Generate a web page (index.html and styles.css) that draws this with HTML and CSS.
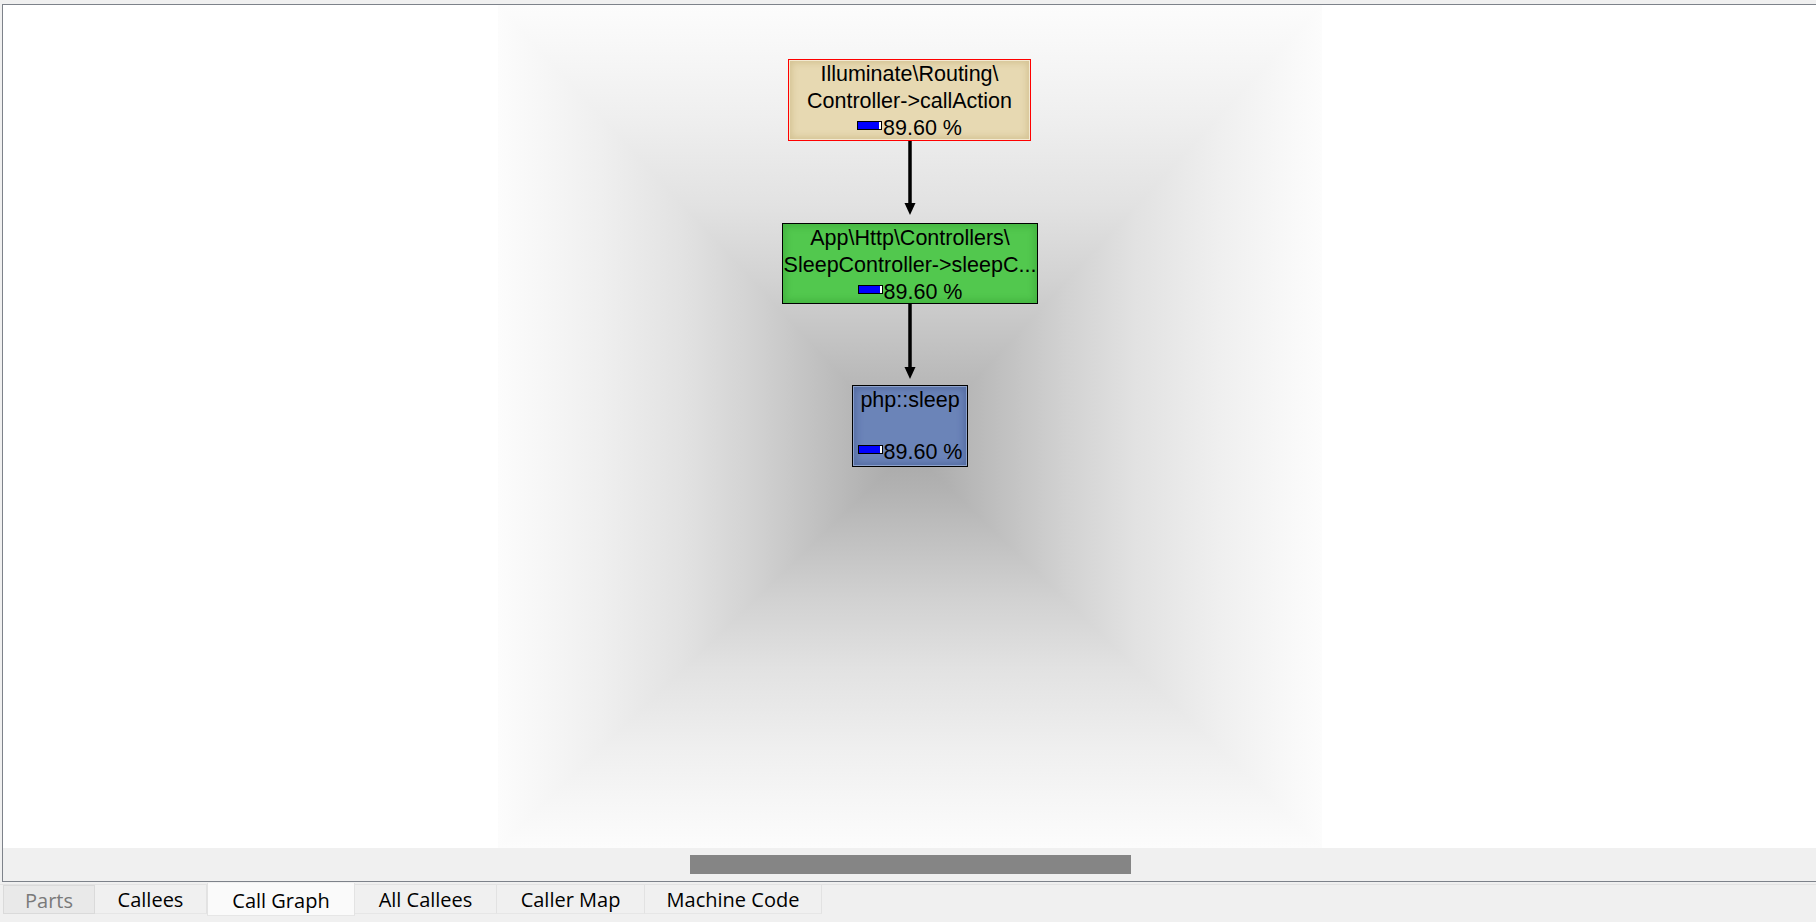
FILE: index.html
```html
<!DOCTYPE html>
<html>
<head>
<meta charset="utf-8">
<title>Call Graph</title>
<link rel="stylesheet" href="styles.css">
</head>
<body>
<div class="app">
  <div class="topgap"></div>
  <div class="panel">
    <div class="canvas">
      <svg class="scene" width="1813" height="843" viewBox="0 0 1813 843" xmlns="http://www.w3.org/2000/svg">
        <defs>
          <linearGradient id="gT" gradientUnits="userSpaceOnUse" x1="0" y1="0" x2="0" y2="445">
            <stop offset="0" stop-color="#fcfcfc"/><stop offset="0.1" stop-color="#f7f7f7"/><stop offset="0.25" stop-color="#efefef"/><stop offset="0.45" stop-color="#e2e2e2"/><stop offset="0.62" stop-color="#d2d2d2"/><stop offset="0.78" stop-color="#c0c0c0"/><stop offset="0.9" stop-color="#b2b2b2"/><stop offset="1" stop-color="#a8a8a8"/>
          </linearGradient>
          <linearGradient id="gB" gradientUnits="userSpaceOnUse" x1="0" y1="843" x2="0" y2="445">
            <stop offset="0" stop-color="#fcfcfc"/><stop offset="0.1" stop-color="#f7f7f7"/><stop offset="0.25" stop-color="#efefef"/><stop offset="0.45" stop-color="#e2e2e2"/><stop offset="0.62" stop-color="#d2d2d2"/><stop offset="0.78" stop-color="#c0c0c0"/><stop offset="0.9" stop-color="#b2b2b2"/><stop offset="1" stop-color="#a8a8a8"/>
          </linearGradient>
          <linearGradient id="gL" gradientUnits="userSpaceOnUse" x1="495" y1="0" x2="907" y2="0">
            <stop offset="0" stop-color="#fcfcfc"/><stop offset="0.1" stop-color="#f7f7f7"/><stop offset="0.25" stop-color="#efefef"/><stop offset="0.45" stop-color="#e2e2e2"/><stop offset="0.62" stop-color="#d2d2d2"/><stop offset="0.78" stop-color="#c0c0c0"/><stop offset="0.9" stop-color="#b2b2b2"/><stop offset="1" stop-color="#a8a8a8"/>
          </linearGradient>
          <linearGradient id="gR" gradientUnits="userSpaceOnUse" x1="1319" y1="0" x2="907" y2="0">
            <stop offset="0" stop-color="#fcfcfc"/><stop offset="0.1" stop-color="#f7f7f7"/><stop offset="0.25" stop-color="#efefef"/><stop offset="0.45" stop-color="#e2e2e2"/><stop offset="0.62" stop-color="#d2d2d2"/><stop offset="0.78" stop-color="#c0c0c0"/><stop offset="0.9" stop-color="#b2b2b2"/><stop offset="1" stop-color="#a8a8a8"/>
          </linearGradient>
        </defs>
        <g shape-rendering="crispEdges">
          <polygon points="495,0 1319,0 907,445" fill="url(#gT)"/>
          <polygon points="495,843 1319,843 907,445" fill="url(#gB)"/>
          <polygon points="495,0 907,445 495,843" fill="url(#gL)"/>
          <polygon points="1319,0 907,445 1319,843" fill="url(#gR)"/>
        </g>
        <line x1="907" y1="136" x2="907" y2="200" stroke="#000" stroke-width="3.5"/>
        <polygon points="901.5,198 912.5,198 907,210" fill="#000"/>
        <line x1="907" y1="299" x2="907" y2="364" stroke="#000" stroke-width="3.5"/>
        <polygon points="901.5,362 912.5,362 907,374" fill="#000"/>
      </svg>

      <div class="node node-caller n1">
        <div class="line">Illuminate\Routing\</div>
        <div class="line">Controller-&gt;callAction</div>
        <div class="line"><span class="bar"></span>89.60 %</div>
      </div>
      <div class="node node-active n2">
        <div class="line">App\Http\Controllers\</div>
        <div class="line">SleepController-&gt;sleepC...</div>
        <div class="line"><span class="bar"></span>89.60 %</div>
      </div>
      <div class="node node-callee n3">
        <div class="line">php::sleep</div>
        <div class="line"></div>
        <div class="line"><span class="bar"></span>89.60 %</div>
      </div>
    </div>
    <div class="hscroll"><div class="thumb"></div></div>
  </div>
  <div class="tabbar">
    <div class="tab disabled t-parts">Parts</div>
    <div class="tab t-callees">Callees</div>
    <div class="tab selected t-graph">Call Graph</div>
    <div class="tab t-all">All Callees</div>
    <div class="tab t-map">Caller Map</div>
    <div class="tab t-code">Machine Code</div>
  </div>
</div>
</body>
</html>
```

FILE: styles.css
```css
html, body {
  margin: 0;
  padding: 0;
}
body {
  width: 1816px;
  height: 922px;
  overflow: hidden;
  background: #f0f0f0;
  font-family: "Open Sans", "Noto Sans", sans-serif;
}
.app {
  display: flex;
  flex-direction: column;
  height: 922px;
}
.topgap {
  height: 4px;
  flex: none;
}
.panel {
  flex: none;
  margin-left: 2px;
  border-top: 1px solid #7d828a;
  border-left: 1px solid #7d828a;
  border-bottom: 1px solid #7d828a;
  display: flex;
  flex-direction: column;
}
.canvas {
  position: relative;
  height: 843px;
  background: #ffffff;
  overflow: hidden;
}
.scene {
  position: absolute;
  left: 0;
  top: 0;
  display: block;
}
.node {
  position: absolute;
  box-sizing: border-box;
  display: flex;
  flex-direction: column;
  align-items: center;
  padding-top: 1px;
  font-family: "Liberation Sans", Arial, sans-serif;
  font-size: 21.5px;
  color: #000;
  white-space: nowrap;
  overflow: hidden;
}
.node .line {
  height: 27px;
  line-height: 27px;
}
.node-caller {
  background: #e7d9b2;
  border: 1px solid #ff0000;
  box-shadow: inset 0 0 0 1px #f3ead2, inset 0 0 6px 3px rgba(160, 130, 60, 0.25);
}
.node-active {
  background: #52c84e;
  border: 1px solid #000;
  box-shadow: inset 0 0 6px 3px rgba(20, 110, 20, 0.22);
}
.node-callee {
  background: #6b84b8;
  border: 1px solid #000;
  box-shadow: inset 0 0 0 1px #8da2cc, inset 0 0 7px 3px rgba(30, 50, 110, 0.3);
}
.n1 { left: 785px; top: 54px; width: 243px; height: 82px; }
.n2 { left: 779px; top: 218px; width: 256px; height: 81px; }
.n3 { left: 849px; top: 380px; width: 116px; height: 82px; }
.bar {
  display: inline-block;
  box-sizing: border-box;
  width: 25px;
  height: 9px;
  border: 1px solid #000;
  background: linear-gradient(to right, #0000ff 90%, #ffffff 90%);
  vertical-align: 5px;
  margin-right: 1px;
}
.hscroll {
  height: 33px;
  background: #f0f0f0;
  position: relative;
}
.thumb {
  margin-left: 687px;
  margin-top: 7px;
  width: 441px;
  height: 19px;
  background: #858585;
}
.tabbar {
  flex: 1;
  display: flex;
  align-items: flex-start;
  padding-left: 3px;
  background: linear-gradient(#f0f0f0 2px, #e3e3e3 2px, #e3e3e3 3px, #f0f0f0 3px);
}
.tab {
  margin-top: 3px;
  height: 29px;
  line-height: 29px;
  text-align: center;
  font-size: 20px;
  color: #000;
  background: #f0f0f0;
  border-right: 1px solid #e2e2e2;
  border-bottom: 1px solid #e6e6e6;
  box-sizing: border-box;
  white-space: nowrap;
}
.tab.disabled {
  color: #7a7a7a;
  background: #e9e9e9;
  border: 1px solid #dadada;
}
.tab.selected {
  margin-top: 1px;
  height: 33px;
  line-height: 35px;
  background: #fafafa;
  border-left: 1px solid #e3e3e3;
  border-right: 1px solid #e3e3e3;
}
.t-parts { width: 92px; }
.t-callees { width: 112px; }
.t-graph { width: 148px; }
.t-all { width: 142px; }
.t-map { width: 148px; }
.t-code { width: 177px; }
```
